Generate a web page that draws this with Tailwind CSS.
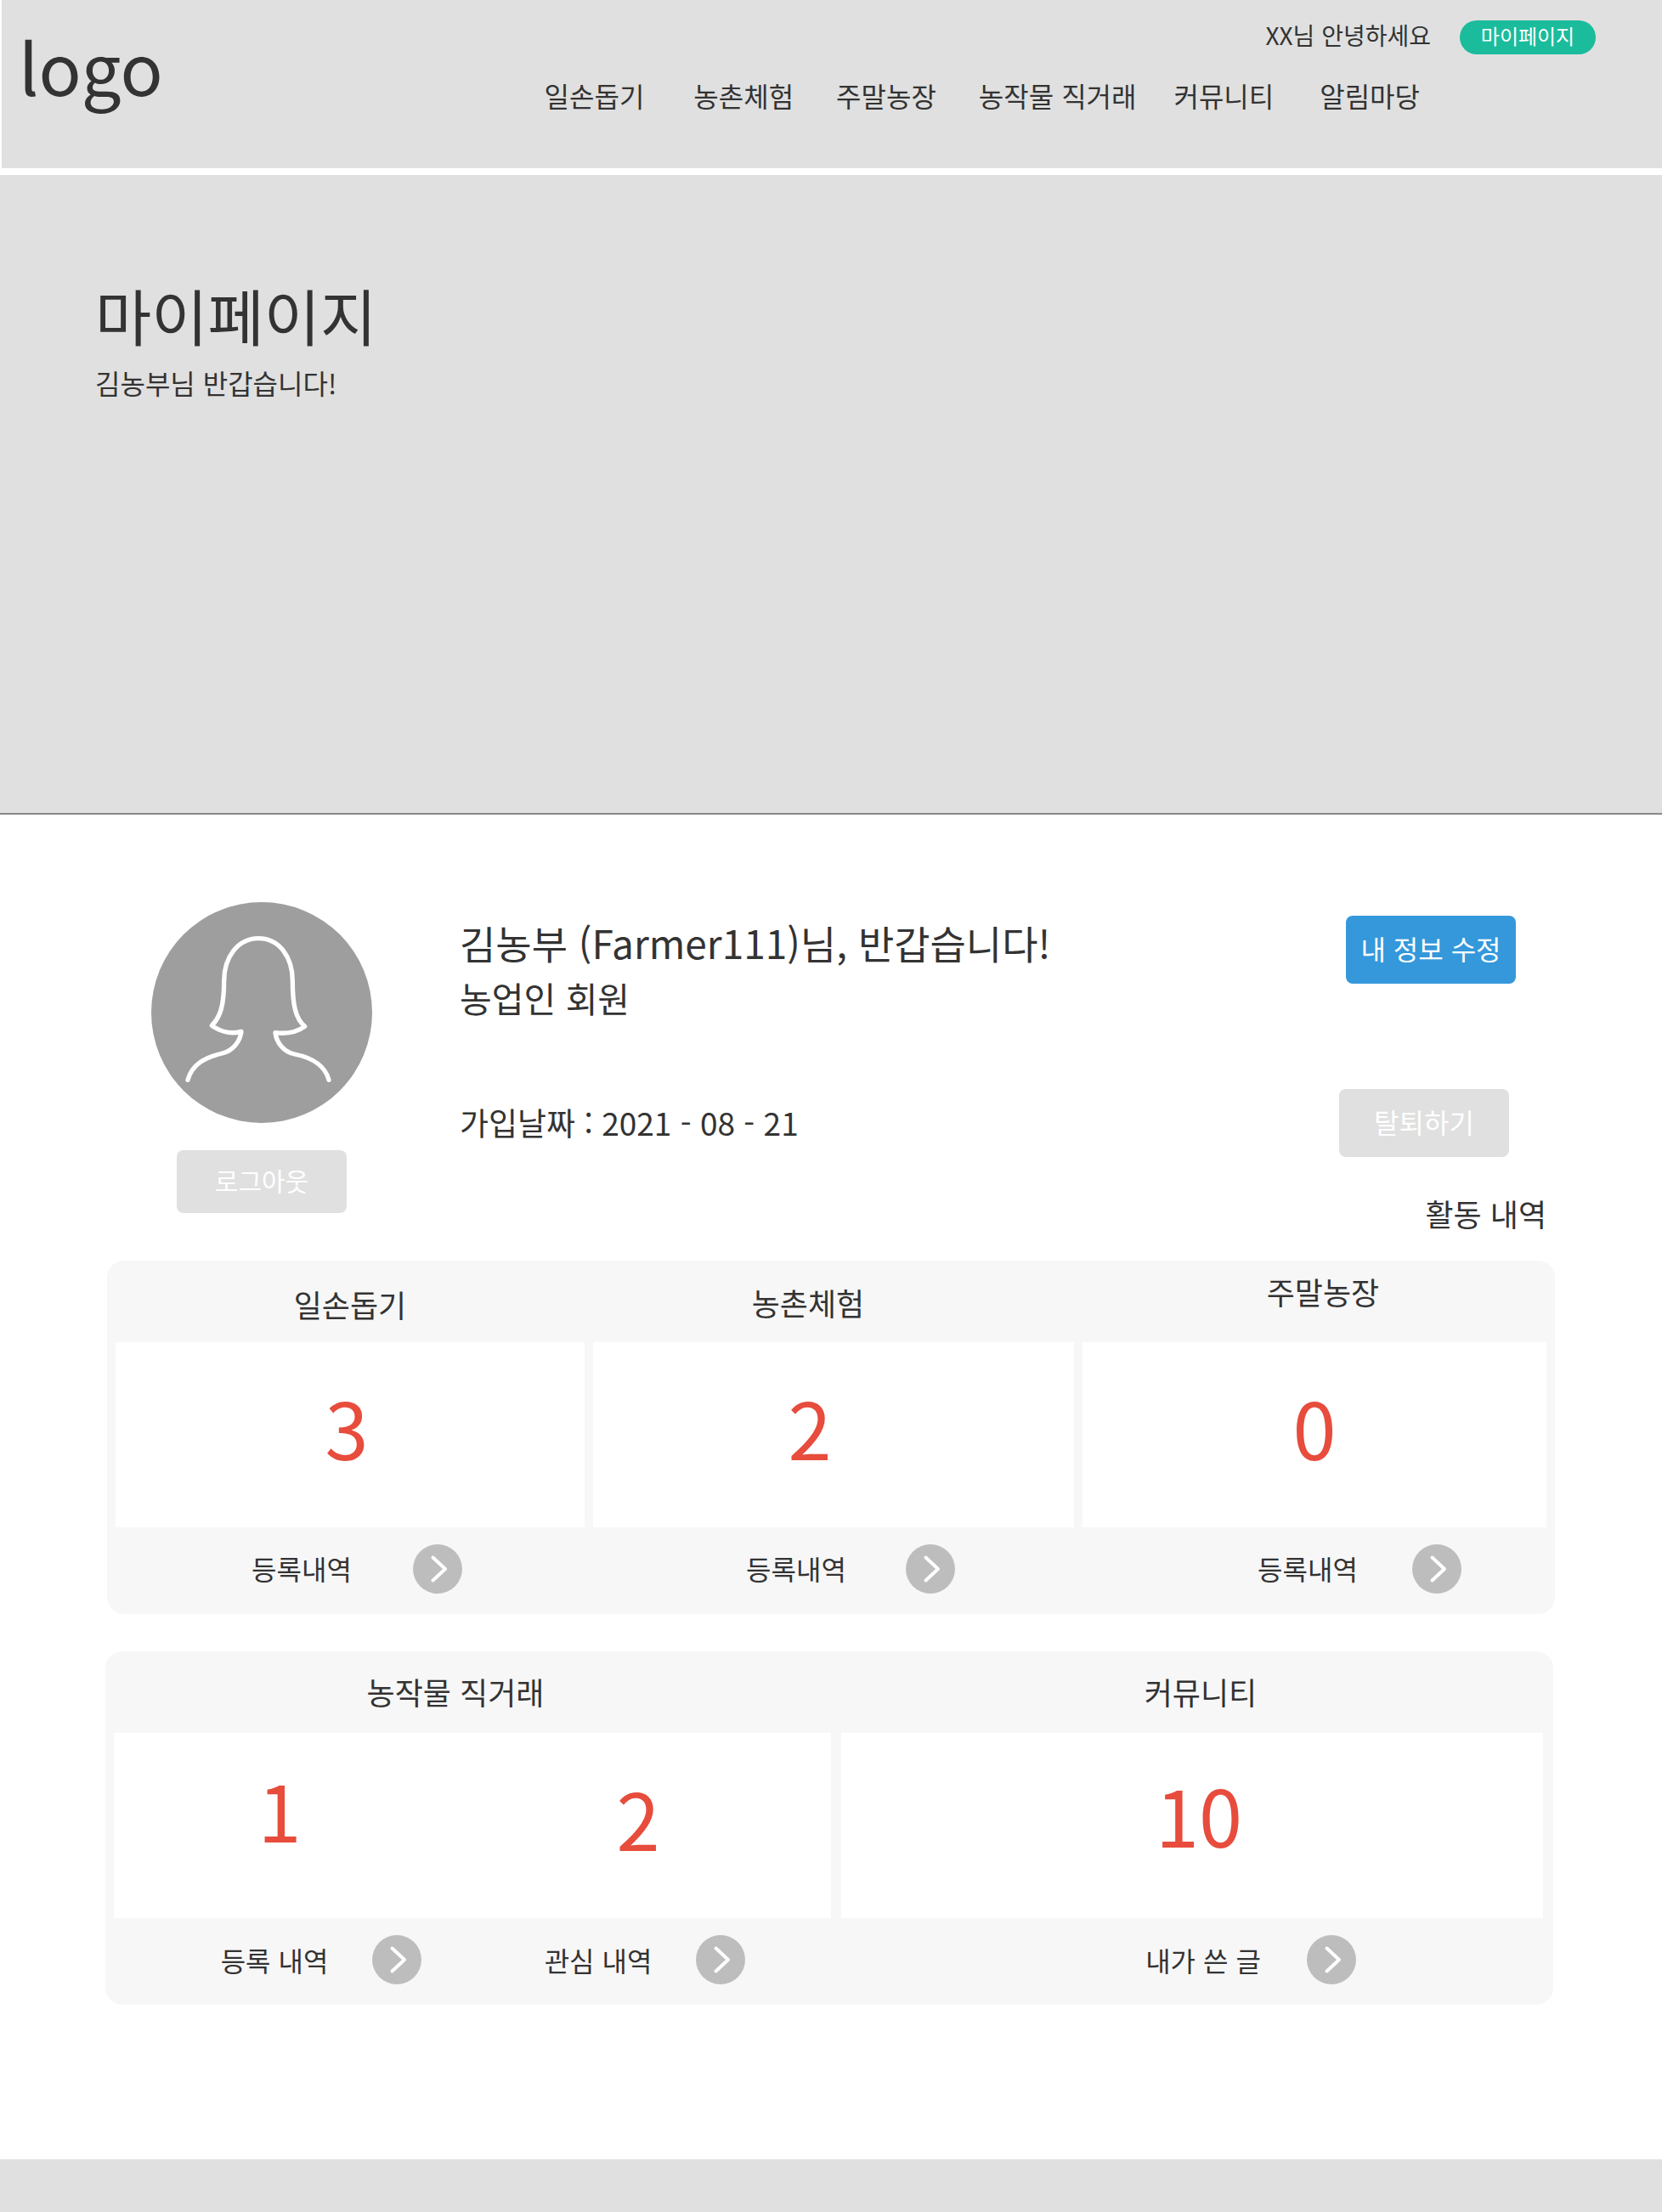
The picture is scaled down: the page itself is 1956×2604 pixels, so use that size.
<!DOCTYPE html>
<html lang="ko">
<head>
<meta charset="utf-8">
<meta name="viewport" content="width=device-width, initial-scale=1">
<title>마이페이지</title>
<script src="https://cdn.jsdelivr.net/npm/@tailwindcss/browser@4"></script>
</head>
<body class="flex min-h-screen flex-col bg-white font-['Noto_Sans_CJK_KR',sans-serif] text-[32px] leading-none text-[#333]">

<svg class="hidden" aria-hidden="true">
  <symbol id="go" viewBox="0 0 58 58">
    <circle cx="29" cy="29" r="29" fill="#bdbdbd"/>
    <path d="M23.500 15.500 38 29 23.500 42.500" fill="none" stroke="#fff" stroke-width="4" stroke-linecap="round" stroke-linejoin="round"/>
  </symbol>
</svg>

<header class="flex h-[198px] items-start justify-between border-l-2 border-white bg-[#e0e0e0]">
  <a href="#" class="pt-9 pl-5 text-[83px]">logo</a>
  <div class="flex flex-col items-end pt-6 pr-[78px]">
    <div class="flex h-10 items-center gap-[34px]">
      <span class="pb-[6px] text-[28px]">XX님 안녕하세요</span>
      <a href="#" class="flex h-10 w-40 items-center justify-center rounded-full bg-[#1abc9c] pb-1 text-2xl leading-none text-white">마이페이지</a>
    </div>
    <nav class="mt-8 mr-[207px] flex whitespace-nowrap">
      <a href="#" class="mr-[58px]">일손돕기</a>
      <a href="#" class="mr-[50px]">농촌체험</a>
      <a href="#" class="mr-[50px]">주말농장</a>
      <a href="#" class="mr-[44px]">농작물 직거래</a>
      <a href="#" class="mr-[54px]">커뮤니티</a>
      <a href="#">알림마당</a>
    </nav>
  </div>
</header>

<section class="mt-2 h-[753px] border-b-2 border-[#888] bg-[#e0e0e0] pt-32 pl-28">
  <h1 class="text-[72px]">마이페이지</h1>
  <p class="mt-7">김농부님 반갑습니다!</p>
</section>

<main class="flex-1">
  <section class="flex h-[525px] pt-[103px] pr-[136px] pl-[178px]">
    <div class="flex w-[260px] shrink-0 flex-col items-center">
      <svg class="size-[260px]" viewBox="84 96 780 780" role="img" aria-label="프로필 사진">
        <circle cx="474" cy="486" r="390" fill="#9e9e9e"/>
        <path d="M213 724C228 668 275 644 335 630C370 622 398 590 402 553C365 563 332 556 298 532C328 502 341 460 341 375C341 290 390 224 463 224C536 224 583 290 583 375C583 460 594 508 626 535C597 556 562 562 522 557C526 592 552 626 590 633C650 645 697 670 711 724" fill="none" stroke="#fff" stroke-width="16" stroke-linecap="round" stroke-linejoin="round"/>
      </svg>
      <button type="button" class="mt-8 h-[74px] w-[200px] rounded-lg bg-[#e0e0e0] pb-1 text-[30px] leading-none text-white">로그아웃</button>
    </div>
    <div class="ml-[103px] flex-1 pt-6">
      <h2 class="text-[46px]">김농부 (Farmer111)님, 반갑습니다!</h2>
      <p class="mt-[22px] text-[41px]">농업인 회원</p>
      <p class="mt-[108px] text-[37px]">가입날짜 : 2021 - 08 - 21</p>
    </div>
    <div class="flex flex-col items-end pt-4">
      <button type="button" class="mr-9 h-20 w-[200px] rounded-lg bg-[#3498db] pb-1 text-white">내 정보 수정</button>
      <button type="button" class="mt-[124px] mr-11 h-20 w-[200px] rounded-lg bg-[#e0e0e0] pb-1 text-white">탈퇴하기</button>
      <h2 class="mt-12 text-4xl leading-none">활동 내역</h2>
    </div>
  </section>

  <section class="mr-[126px] ml-[126px] grid h-[416px] grid-cols-[552fr_566fr_546fr] grid-rows-[96px_218px_1fr] gap-x-[10px] rounded-[20px] bg-[#f7f7f7] px-[10px]">
    <h3 class="flex items-center justify-center pt-[6px] text-4xl leading-none">일손돕기</h3>
    <h3 class="flex items-center justify-center pt-[2px] pr-[60px] text-4xl leading-none">농촌체험</h3>
    <h3 class="flex items-center justify-center pb-6 pl-5 text-4xl leading-none">주말농장</h3>

    <p class="flex items-center justify-center bg-white pr-2 pb-5 text-[92px] text-[#e74c3c]">3</p>
    <p class="flex items-center justify-center bg-white pr-[56px] pb-5 text-[92px] text-[#e74c3c]">2</p>
    <p class="flex items-center justify-center bg-white pb-5 text-[92px] text-[#e74c3c]">0</p>

    <div class="flex items-center justify-center gap-[72px] pb-1 pl-4">
      <span class="pb-[2px]">등록내역</span>
      <a href="#" aria-label="일손돕기 등록내역 보기"><svg class="size-[58px]"><use href="#go"/></svg></a>
    </div>
    <div class="flex items-center justify-center gap-[70px] pb-1 pl-10">
      <span class="pb-[2px]">등록내역</span>
      <a href="#" aria-label="농촌체험 등록내역 보기"><svg class="size-[58px]"><use href="#go"/></svg></a>
    </div>
    <div class="flex items-center justify-center gap-16 pb-1 pl-[106px]">
      <span class="pb-[2px]">등록내역</span>
      <a href="#" aria-label="주말농장 등록내역 보기"><svg class="size-[58px]"><use href="#go"/></svg></a>
    </div>
  </section>

  <section class="mt-11 mr-[128px] ml-[124px] grid h-[416px] grid-cols-[844fr_826fr] grid-rows-[96px_218px_1fr] gap-x-3 rounded-[20px] bg-[#f7f7f7] pr-3 pl-[10px]">
    <h3 class="flex items-center justify-center pr-10 pb-[2px] text-4xl leading-none">농작물 직거래</h3>
    <h3 class="flex items-center justify-center pb-[2px] pl-5 text-4xl leading-none">커뮤니티</h3>

    <div class="grid grid-cols-2 bg-white text-[92px] text-[#e74c3c]">
      <p class="flex items-center justify-center pr-8 pb-10">1</p>
      <p class="flex items-center justify-center pr-8 pb-5">2</p>
    </div>
    <p class="flex items-center justify-center bg-white pb-7 pl-4 text-[92px] text-[#e74c3c]">10</p>

    <div class="grid grid-cols-2 pb-1">
      <div class="flex items-center justify-center gap-[52px] pl-[66px]">
        <span>등록 내역</span>
        <a href="#" aria-label="농작물 직거래 등록 내역 보기"><svg class="size-[58px]"><use href="#go"/></svg></a>
      </div>
      <div class="flex items-center justify-center gap-[52px] pr-4">
        <span>관심 내역</span>
        <a href="#" aria-label="농작물 직거래 관심 내역 보기"><svg class="size-[58px]"><use href="#go"/></svg></a>
      </div>
    </div>
    <div class="flex items-center justify-center gap-[54px] pb-1 pl-[138px]">
      <span>내가 쓴 글</span>
      <a href="#" aria-label="내가 쓴 글 보기"><svg class="size-[58px]"><use href="#go"/></svg></a>
    </div>
  </section>
</main>

<footer class="h-[62px] bg-[#e0e0e0]"></footer>
</body>
</html>
